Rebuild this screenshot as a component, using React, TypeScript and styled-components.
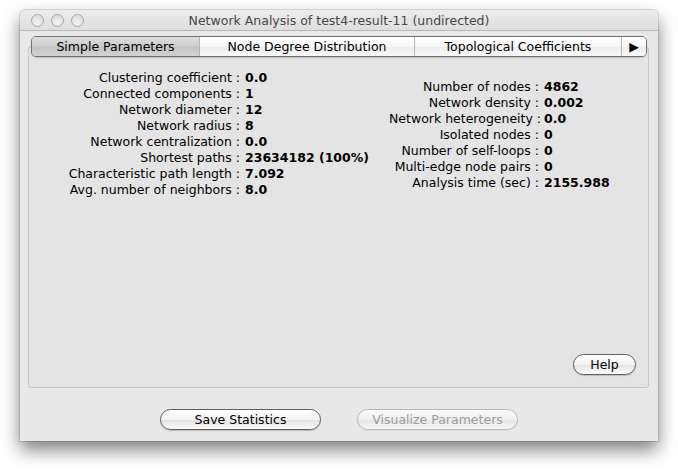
import { Fragment } from 'react';
import styled, { createGlobalStyle } from 'styled-components';

const GlobalStyle = createGlobalStyle`
  html, body {
    margin: 0;
    padding: 0;
    background: #ffffff;
  }
  body {
    font-family: "DejaVu Sans", "Liberation Sans", sans-serif;
    font-size: 13px;
    color: #000;
  }
`;

const Page = styled.div`
  padding: 10px 20px 0 20px;
  width: 678px;
  height: 471px;
  box-sizing: border-box;
`;

const Window = styled.div`
  width: 638px;
  height: 431px;
  display: flex;
  flex-direction: column;
  background: #e8e8e8;
  border-radius: 5px 5px 0 0;
  box-shadow: 0 9px 18px rgba(0, 0, 0, 0.5), 0 0 0 1px rgba(0, 0, 0, 0.12);
  overflow: hidden;
`;

const TitleBar = styled.div`
  height: 21px;
  flex: none;
  display: flex;
  align-items: center;
  position: relative;
  background: linear-gradient(#ececec, #dedede);
  border-bottom: 1px solid #b9b9b9;
  box-sizing: border-box;
`;

const Lights = styled.div`
  display: flex;
  gap: 7px;
  margin-left: 11px;
`;

const Light = styled.span`
  width: 13px;
  height: 13px;
  border-radius: 50%;
  box-sizing: border-box;
  border: 1px solid #a9a9a9;
  background: radial-gradient(circle at 50% 70%, #f4f4f4, #d4d4d4);
`;

const Title = styled.div`
  position: absolute;
  left: 0;
  right: 0;
  text-align: center;
  font-size: 12.5px;
  color: #464646;
  pointer-events: none;
`;

const Body = styled.div`
  flex: 1;
  display: flex;
  flex-direction: column;
  padding: 5px 9px 0 8px;
`;

const TabStrip = styled.div`
  position: relative;
  z-index: 1;
  display: flex;
  height: 21px;
  margin: 0 2px 0 3px;
  box-sizing: border-box;
  border: 1px solid #6f6f6f;
  border-radius: 5px;
  overflow: hidden;
  box-shadow: 0 1px 1px rgba(0, 0, 0, 0.15);
`;

const Tab = styled.div<{ $w: number; $active?: boolean }>`
  width: ${(p) => p.$w}px;
  flex: none;
  display: flex;
  align-items: center;
  justify-content: center;
  font-size: 12.5px;
  box-sizing: border-box;
  border-left: 1px solid #b4b4b4;
  background: ${(p) =>
    p.$active
      ? 'linear-gradient(#dedede, #cbcbcb 50%, #c3c3c3 51%, #d2d2d2)'
      : 'linear-gradient(#ffffff, #f6f6f6 50%, #ececec 51%, #f8f8f8)'};
  &:first-child {
    border-left: none;
  }
  &:last-child {
    flex: 1;
  }
`;

const Panel = styled.div`
  margin-top: -11px;
  height: 342px;
  box-sizing: border-box;
  border: 1px solid #c6c6c6;
  border-radius: 3px;
  background: #e4e4e4;
  display: flex;
  flex-direction: column;
  padding: 23px 12px 12px 0;
`;

const Stats = styled.div`
  flex: 1;
  display: grid;
  grid-template-columns: 360px auto;
  align-items: start;
`;

const StatGrid = styled.div<{ $left: number; $top: number; $label: number }>`
  display: grid;
  grid-template-columns: ${(p) => p.$label}px auto;
  justify-content: start;
  column-gap: 5px;
  margin-left: ${(p) => p.$left}px;
  margin-top: ${(p) => p.$top}px;
  line-height: 16px;
  font-size: 12.5px;
`;

const Label = styled.span`
  text-align: right;
  white-space: nowrap;
`;

const Value = styled.span`
  font-weight: bold;
  white-space: nowrap;
`;

const PanelFooter = styled.div`
  display: flex;
  justify-content: flex-end;
`;

const PillButton = styled.button<{ $w: number; $disabled?: boolean }>`
  width: ${(p) => p.$w}px;
  height: 21px;
  padding: 0;
  font-family: inherit;
  font-size: 12.5px;
  border-radius: 11px;
  border: 1px solid ${(p) => (p.$disabled ? '#b7b7b7' : '#5f5f5f')};
  color: ${(p) => (p.$disabled ? '#9c9c9c' : '#000')};
  background: ${(p) =>
    p.$disabled
      ? 'linear-gradient(#fafafa, #f0f0f0 50%, #e6e6e6 51%, #f4f4f4)'
      : 'linear-gradient(#ffffff, #f2f2f2 50%, #e2e2e2 51%, #fbfbfb)'};
  box-shadow: 0 1px 1px rgba(0, 0, 0, ${(p) => (p.$disabled ? 0.05 : 0.18)});
`;

const ButtonRow = styled.div`
  flex: 1;
  display: flex;
  justify-content: center;
  gap: 36px;
  padding-top: 21px;
`;

const leftStats: [string, string][] = [
  ['Clustering coefficient', '0.0'],
  ['Connected components', '1'],
  ['Network diameter', '12'],
  ['Network radius', '8'],
  ['Network centralization', '0.0'],
  ['Shortest paths', '23634182 (100%)'],
  ['Characteristic path length', '7.092'],
  ['Avg. number of neighbors', '8.0'],
];

const rightStats: [string, string][] = [
  ['Number of nodes', '4862'],
  ['Network density', '0.002'],
  ['Network heterogeneity', '0.0'],
  ['Isolated nodes', '0'],
  ['Number of self-loops', '0'],
  ['Multi-edge node pairs', '0'],
  ['Analysis time (sec)', '2155.988'],
];

function StatList({ rows, left, top, label }: { rows: [string, string][]; left: number; top: number; label: number }) {
  return (
    <StatGrid $left={left} $top={top} $label={label}>
      {rows.map(([k, v]) => (
        <Fragment key={k}>
          <Label>{k} :</Label>
          <Value>{v}</Value>
        </Fragment>
      ))}
    </StatGrid>
  );
}

export default function App() {
  return (
    <>
      <GlobalStyle />
      <Page>
        <Window>
          <TitleBar>
            <Lights>
              <Light />
              <Light />
              <Light />
            </Lights>
            <Title>Network Analysis of test4-result-11 (undirected)</Title>
          </TitleBar>
          <Body>
            <TabStrip>
              <Tab $w={167} $active>Simple Parameters</Tab>
              <Tab $w={215}>Node Degree Distribution</Tab>
              <Tab $w={207}>Topological Coefficients</Tab>
              <Tab $w={27}>▶</Tab>
            </TabStrip>
            <Panel>
              <Stats>
                <StatList rows={leftStats} left={38} top={0} label={173} />
                <StatList rows={rightStats} left={0} top={9} label={150} />
              </Stats>
              <PanelFooter>
                <PillButton $w={63}>Help</PillButton>
              </PanelFooter>
            </Panel>
          </Body>
          <ButtonRow>
            <PillButton $w={161}>Save Statistics</PillButton>
            <PillButton $w={161} $disabled>Visualize Parameters</PillButton>
          </ButtonRow>
        </Window>
      </Page>
    </>
  );
}
